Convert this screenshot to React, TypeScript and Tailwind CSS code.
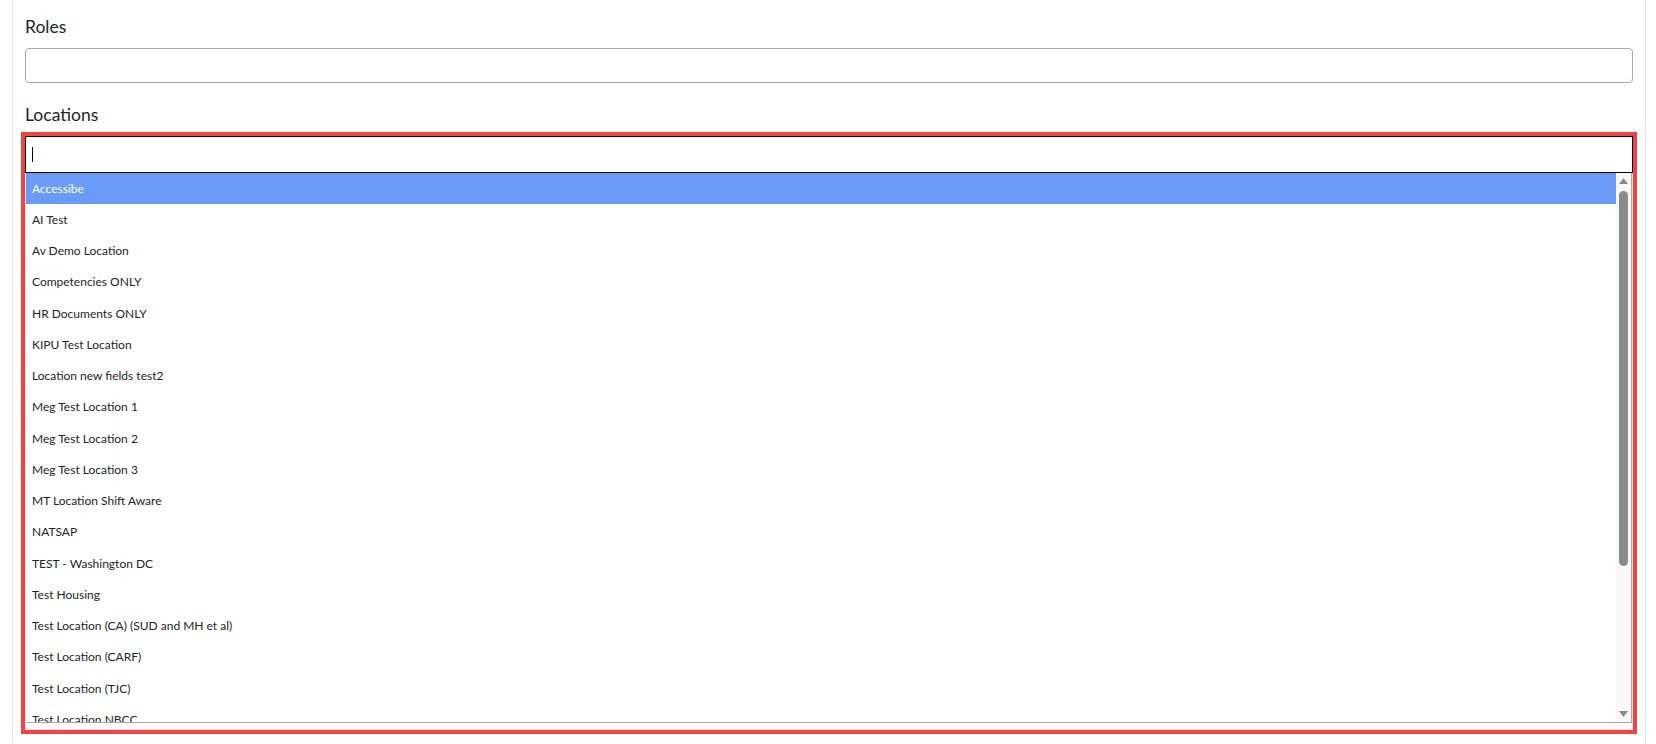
import React from 'react';

const locations = [
  'Accessibe',
  'AI Test',
  'Av Demo Location',
  'Competencies ONLY',
  'HR Documents ONLY',
  'KIPU Test Location',
  'Location new fields test2',
  'Meg Test Location 1',
  'Meg Test Location 2',
  'Meg Test Location 3',
  'MT Location Shift Aware',
  'NATSAP',
  'TEST - Washington DC',
  'Test Housing',
  'Test Location (CA) (SUD and MH et al)',
  'Test Location (CARF)',
  'Test Location (TJC)',
  'Test Location NBCC',
];

const Scrollbar: React.FC = () => (
  <div className="w-[15px] shrink-0 bg-[#f8f8f8] flex flex-col items-center">
    <svg className="mt-[5px]" width="9" height="6" viewBox="0 0 9 6">
      <path d="M4.5 0 L9 6 L0 6 Z" fill="#8b8b8b" />
    </svg>
    <div className="mt-[7px] w-[9px] h-[375px] rounded-full bg-[#8b8b8b]" />
    <div className="flex-1" />
    <svg className="mb-[5px]" width="9" height="6" viewBox="0 0 9 6">
      <path d="M0 0 L9 0 L4.5 6 Z" fill="#8b8b8b" />
    </svg>
  </div>
);

export default function App() {
  return (
    <div className="bg-white h-[744px] overflow-hidden font-['Lato','Liberation_Sans',sans-serif] text-[#212529]">
      <div className="ml-3 mr-[10px] h-full border-x border-[#e4e4ea] px-3 pt-[15px]">
        <div className="text-[17.5px] leading-6">Roles</div>
        <div className="mt-[9px] h-[35px] rounded-[4px] border border-[#aaaaaa] bg-white" />

        <div className="mt-[20px] text-[17.5px] leading-6">Locations</div>

        <div className="-mx-1 mt-[5px] border-4 border-[#f24343]">
          <div className="flex h-[594px] flex-col rounded-[4px] border border-[#dcdce6] bg-white">
            <div className="-mx-px -mt-px flex h-[37px] shrink-0 items-center border border-black bg-white">
              <span className="ml-[6px] h-[15px] w-px bg-black" />
            </div>
            <div className="flex h-[550px] shrink-0 overflow-hidden border-r border-b border-[#a9a9a9]">
              <ul className="flex-1 overflow-hidden">
                {locations.map((name, i) => (
                  <li
                    key={name}
                    className={
                      i === 0
                        ? 'flex h-[31.25px] items-center bg-[#6a9bf8] pl-[6px] text-[12px] text-white'
                        : 'flex h-[31.25px] items-center pl-[6px] text-[12px] text-[#212529]'
                    }
                  >
                    {name}
                  </li>
                ))}
              </ul>
              <Scrollbar />
            </div>
          </div>
        </div>
      </div>
    </div>
  );
}
